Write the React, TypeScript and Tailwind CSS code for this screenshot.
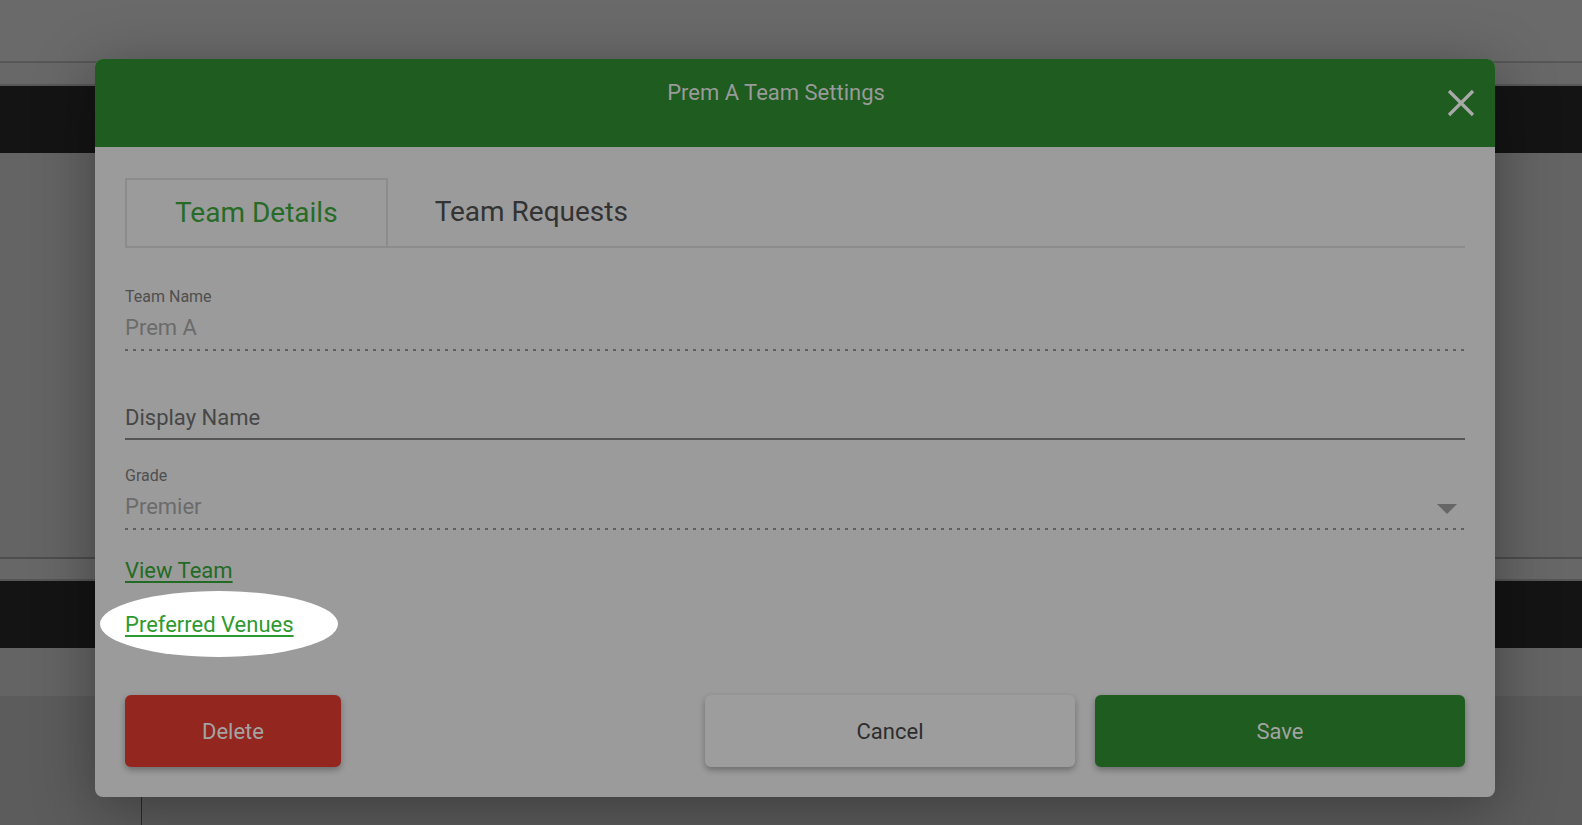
import { ReactNode } from "react";

const font = { fontFamily: "Roboto, 'Noto Sans', sans-serif" };

// dotted underline used by the read-only fields
const dotted =
  "h-[2px] w-full bg-[repeating-linear-gradient(to_right,#5f5f5f_0_3px,transparent_3px_8px)]";

const ReadOnlyField = ({ label, value, children }: { label: string; value: string; children?: ReactNode }) => (
  <div>
    <div className="h-[20px] text-[16px] leading-[20px] text-[#4f4f4f]">{label}</div>
    <div className="relative mt-[7px] pb-[7px]">
      <div className="h-[28px] text-[22px] leading-[28px] text-[#6b6b6b]">{value}</div>
      {children}
    </div>
    <div className={dotted} />
  </div>
);

const Backdrop = () => (
  <div className="flex h-full w-full flex-col">
    <div className="h-[61px] bg-[#6a6a6a]" />
    <div className="h-[2px] bg-[#575757]" />
    <div className="h-[21px] bg-[#686868]" />
    <div className="h-[2px] bg-[#575757]" />
    <div className="h-[67px] bg-[#141414]" />
    <div className="h-[404px] bg-[#646464]" />
    <div className="h-[2px] bg-[#4d4d4d]" />
    <div className="h-[20px] bg-[#676767]" />
    <div className="h-[2px] bg-[#565656]" />
    <div className="h-[67px] bg-[#141414]" />
    <div className="h-[48px] bg-[#646464]" />
    <div className="flex flex-1 bg-[#5c5c5c]">
      <div className="w-[141px]" />
      <div className="w-px bg-[#2c2c2c]" />
    </div>
  </div>
);

export default function App() {
  return (
    <div className="relative h-[825px] w-[1582px] overflow-hidden" style={font}>
      <Backdrop />

      {/* Modal */}
      <div className="absolute left-[95px] top-[59px] w-[1400px] overflow-hidden rounded-lg bg-[#9b9b9b] shadow-[0_12px_60px_rgba(0,0,0,0.35)]">
        <div className="relative h-[88px] bg-[#1e5c1f] pr-[38px] pt-[20px] text-center text-[22px] leading-[28px] text-[#9a9a9a]">
          Prem A Team Settings
          <button className="absolute right-[20px] top-[30px]">
            <svg width="28" height="28" viewBox="0 0 28 28">
              <path d="M2 2 L26 26 M26 2 L2 26" stroke="#a9a9a9" strokeWidth="3.2" />
            </svg>
          </button>
        </div>

        <div className="px-[30px] pb-[30px] pt-[31px]">
          {/* Tabs */}
          <div className="flex">
            <div className="flex h-[70px] items-center border-2 border-[#8c8c8c] px-[48px] text-[28px] text-[#276b27]">
              Team Details
            </div>
            <div className="flex h-[70px] items-center border-b-2 border-[#8c8c8c] px-[47px] text-[28px] text-[#333333]">
              Team Requests
            </div>
            <div className="flex-1 border-b-2 border-[#8c8c8c]" />
          </div>

          <div className="mt-[39px]">
            <ReadOnlyField label="Team Name" value="Prem A" />
          </div>

          <div className="mt-[53px]">
            <div className="h-[28px] text-[22px] leading-[28px] text-[#474747]">Display Name</div>
            <div className="mt-[6px] h-[2px] bg-[#555555]" />
          </div>

          <div className="mt-[26px]">
            <ReadOnlyField label="Grade" value="Premier">
              <svg className="absolute right-[8px] top-[11px]" width="20" height="10" viewBox="0 0 20 10">
                <path d="M0 0 L20 0 L10 10 Z" fill="#666666" />
              </svg>
            </ReadOnlyField>
          </div>

          <div className="mt-[27px] flex flex-col items-start gap-[26px] text-[22px] leading-[28px]">
            <a className="text-[#236b25] underline decoration-2 underline-offset-[3px]">View Team</a>
            <div className="relative">
              <div className="absolute -left-[25px] -top-[20px] h-[66px] w-[238px] rounded-[50%] bg-white" />
              <a className="relative text-[#2e9a2e] underline decoration-2 underline-offset-[3px]">Preferred Venues</a>
            </div>
          </div>

          {/* Actions */}
          <div className="mt-[56px] flex gap-[20px]">
            <button className="h-[72px] w-[216px] rounded-md bg-[#932720] text-[22px] text-[#a3a3a3] shadow-[0_3px_6px_rgba(0,0,0,0.3)]">
              Delete
            </button>
            <button className="ml-auto h-[72px] w-[370px] rounded-md bg-[#9d9d9d] text-[22px] text-[#2d2d2d] shadow-[0_3px_6px_rgba(0,0,0,0.3)]">
              Cancel
            </button>
            <button className="h-[72px] w-[370px] rounded-md bg-[#1f5c1f] text-[22px] text-[#a3a3a3] shadow-[0_3px_6px_rgba(0,0,0,0.3)]">
              Save
            </button>
          </div>
        </div>
      </div>
    </div>
  );
}
